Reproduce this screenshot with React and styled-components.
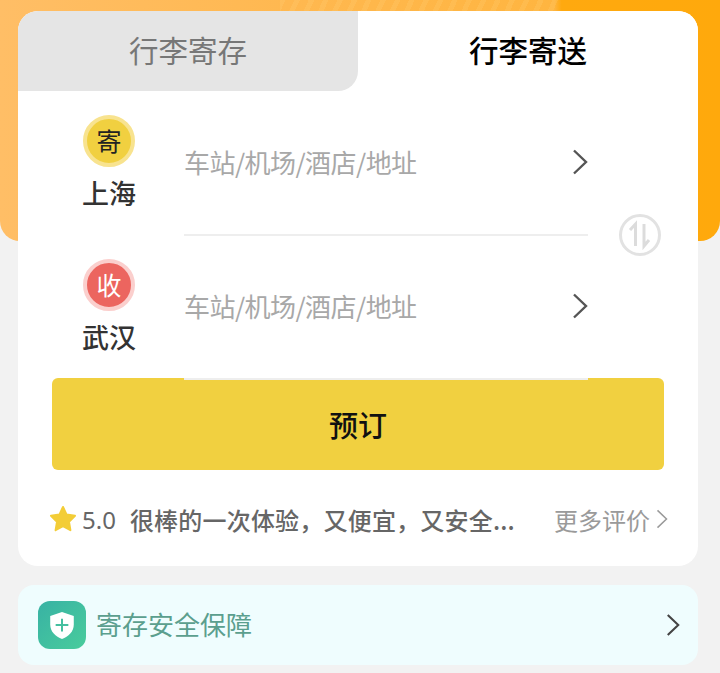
import React from 'react';
import styled, { createGlobalStyle } from 'styled-components';

const GlobalStyle = createGlobalStyle`
  html, body {
    margin: 0;
    padding: 0;
    background: #f2f2f2;
    font-family: "Noto Sans CJK SC", "Noto Sans", sans-serif;
  }
`;

const rows = [
  { id: 'from', badge: '寄', city: '上海', tone: 'yellow' },
  { id: 'to', badge: '收', city: '武汉', tone: 'red' },
];

const Chevron = ({ size = 16, height = 26, color = '#555', weight = 2.4 }) => (
  <svg width={size} height={height} viewBox="0 0 16 26" fill="none">
    <path d="M2 1.5 L14 13 L2 24.5" stroke={color} strokeWidth={weight} />
  </svg>
);

const SwapIcon = () => (
  <svg width="44" height="44" viewBox="0 0 44 44" fill="none">
    <circle cx="22" cy="22" r="19.5" stroke="#e2e2e2" strokeWidth="3" />
    <path d="M17.5 33 V11 L12 17" stroke="#dcdcdc" strokeWidth="3" />
    <path d="M26 11 V33 L31 27" stroke="#dcdcdc" strokeWidth="3" />
  </svg>
);

const StarIcon = () => (
  <svg width="28" height="28" viewBox="0 0 28 28">
    <path
      d="M14 2 L17.6 9.6 L26 10.8 L20 16.8 L21.4 25.2 L14 21.2 L6.6 25.2 L8 16.8 L2 10.8 L10.4 9.6 Z"
      fill="#f3cd37"
      stroke="#f3cd37"
      strokeWidth="2"
      strokeLinejoin="round"
    />
  </svg>
);

const ShieldIcon = () => (
  <svg width="26" height="29" viewBox="0 0 28 32">
    <path d="M14 1 L27 5.5 V15 C27 23 21 28.5 14 31 C7 28.5 1 23 1 15 V5.5 Z" fill="#fff" />
    <path d="M14 8.5 V22.5 M7 15.5 H21" stroke="#45bfa0" strokeWidth="2.2" />
  </svg>
);

export default function App() {
  return (
    <>
      <GlobalStyle />
      <Page>
        <Hero />
        <Card>
          <Tabs>
            <Tab>行李寄存</Tab>
            <Tab $active>行李寄送</Tab>
          </Tabs>
          <Form>
            {rows.map((row) => (
              <Row key={row.id}>
                <Place>
                  <Badge $tone={row.tone}>{row.badge}</Badge>
                  <City>{row.city}</City>
                </Place>
                <Field>
                  <Placeholder>车站/机场/酒店/地址</Placeholder>
                  <FieldArrow>
                    <Chevron />
                  </FieldArrow>
                </Field>
              </Row>
            ))}
            <SwapButton>
              <SwapIcon />
            </SwapButton>
          </Form>
          <BookButton>预订</BookButton>
          <Review>
            <StarIcon />
            <Score>5.0</Score>
            <Comment>很棒的一次体验，又便宜，又安全...</Comment>
            <MoreLink>
              更多评价
              <Chevron size={12} height={20} color="#9a9a9a" weight={2} />
            </MoreLink>
          </Review>
        </Card>
        <SafetyCard>
          <SafetyIcon>
            <ShieldIcon />
          </SafetyIcon>
          <SafetyText>寄存安全保障</SafetyText>
          <Chevron size={14} height={24} color="#444" />
        </SafetyCard>
      </Page>
    </>
  );
}

// STYLES
const Page = styled.div`
  position: relative;
  width: 720px;
  height: 673px;
  box-sizing: border-box;
  padding: 11px 22px 0 18px;
  overflow: hidden;
  background: #f2f2f2;
`;

const Hero = styled.div`
  position: absolute;
  top: 0;
  left: 0;
  right: 0;
  height: 241px;
  border-radius: 0 0 20px 20px;
  background:
    repeating-linear-gradient(115deg, rgba(255, 225, 150, 0.14) 0 5px, transparent 5px 13px) 280px 0 / 280px 11px no-repeat,
    linear-gradient(90deg, #ffbe66 0%, #ffb850 40%, #ffb540 77%, #ffa90f 78%, #ffa90c 100%);
`;

const Card = styled.div`
  position: relative;
  height: 555px;
  border-radius: 20px;
  background: #fff;
  overflow: hidden;
`;

const Tabs = styled.div`
  display: grid;
  grid-template-columns: 340px 340px;
  height: 80px;
`;

const Tab = styled.div`
  display: flex;
  align-items: center;
  justify-content: center;
  padding-bottom: 4px;
  font-size: 29.5px;
  font-weight: ${({ $active }) => ($active ? 500 : 400)};
  color: ${({ $active }) => ($active ? '#000' : '#777')};
  background: ${({ $active }) => ($active ? '#fff' : '#e5e5e5')};
  border-radius: ${({ $active }) => ($active ? '0' : '0 0 20px 0')};
`;

const Form = styled.div`
  position: relative;
  padding: 0 0 0 38px;
`;

const Row = styled.div`
  display: flex;
  height: 144px;
`;

const Place = styled.div`
  width: 106px;
  margin-top: 24px;
  display: flex;
  flex-direction: column;
  align-items: center;
  flex-shrink: 0;
`;

const toneColors = {
  yellow: { fill: '#f1d040', ring: '#f8e38f', text: '#222' },
  red: { fill: '#ec655f', ring: '#fbcfcd', text: '#fff' },
};

const Badge = styled.div`
  width: 44px;
  height: 42px;
  margin-bottom: 8px;
  padding-bottom: 2px;
  border: 4px solid ${({ $tone }) => toneColors[$tone].ring};
  border-radius: 50%;
  display: flex;
  align-items: center;
  justify-content: center;
  font-size: 25px;
  line-height: 1;
  color: ${({ $tone }) => toneColors[$tone].text};
  background: ${({ $tone }) => toneColors[$tone].fill};
`;

const City = styled.div`
  font-size: 27px;
  line-height: 36px;
  font-weight: 500;
  color: #333;
`;

const Field = styled.div`
  width: 404px;
  margin: 1px 0 0 22px;
  padding-top: 49px;
  height: 144px;
  box-sizing: border-box;
  border-bottom: 2px solid #eeeeee;
  display: flex;
  justify-content: space-between;
  align-items: flex-start;
`;

const FieldArrow = styled.div`
  margin-top: 8px;
  line-height: 0;
`;

const Placeholder = styled.div`
  font-size: 26px;
  line-height: 44px;
  margin-top: -1px;
  letter-spacing: -0.55px;
  color: #a8a8a8;
  white-space: nowrap;
`;

const SwapButton = styled.div`
  position: absolute;
  top: 122px;
  right: 36px;
  width: 44px;
  height: 44px;
`;

const BookButton = styled.div`
  margin: -1px 34px 0;
  height: 92px;
  border-radius: 6px;
  background: #f1d040;
  display: flex;
  align-items: center;
  justify-content: center;
  font-size: 29px;
  font-weight: 500;
  color: #111;
`;

const Review = styled.div`
  margin: 34px 30px 0 31px;
  display: flex;
  align-items: center;
  height: 30px;
  color: #666;
`;

const Score = styled.span`
  margin-left: 5px;
  font-family: "Noto Sans", sans-serif;
  font-size: 24px;
`;

const Comment = styled.span`
  margin-left: 14px;
  width: 390px;
  font-size: 24px;
  font-weight: 500;
  letter-spacing: 0.2px;
  white-space: nowrap;
  overflow: hidden;
`;

const MoreLink = styled.span`
  margin-left: auto;
  display: flex;
  align-items: center;
  gap: 6px;
  font-size: 24px;
  color: #9a9a9a;
`;

const SafetyCard = styled.div`
  width: 680px;
  height: 80px;
  margin-top: 19px;
  padding: 0 18px 0 20px;
  box-sizing: border-box;
  position: relative;
  border-radius: 16px;
  background: #effdfe;
  display: flex;
  align-items: center;
`;

const SafetyIcon = styled.div`
  width: 48px;
  height: 48px;
  border-radius: 12px;
  background: linear-gradient(135deg, #38b2a4, #49cc9c);
  display: flex;
  align-items: center;
  justify-content: center;
`;

const SafetyText = styled.span`
  margin: -3px 0 0 10px;
  flex: 1;
  font-size: 26px;
  color: #5b9f8e;
`;
